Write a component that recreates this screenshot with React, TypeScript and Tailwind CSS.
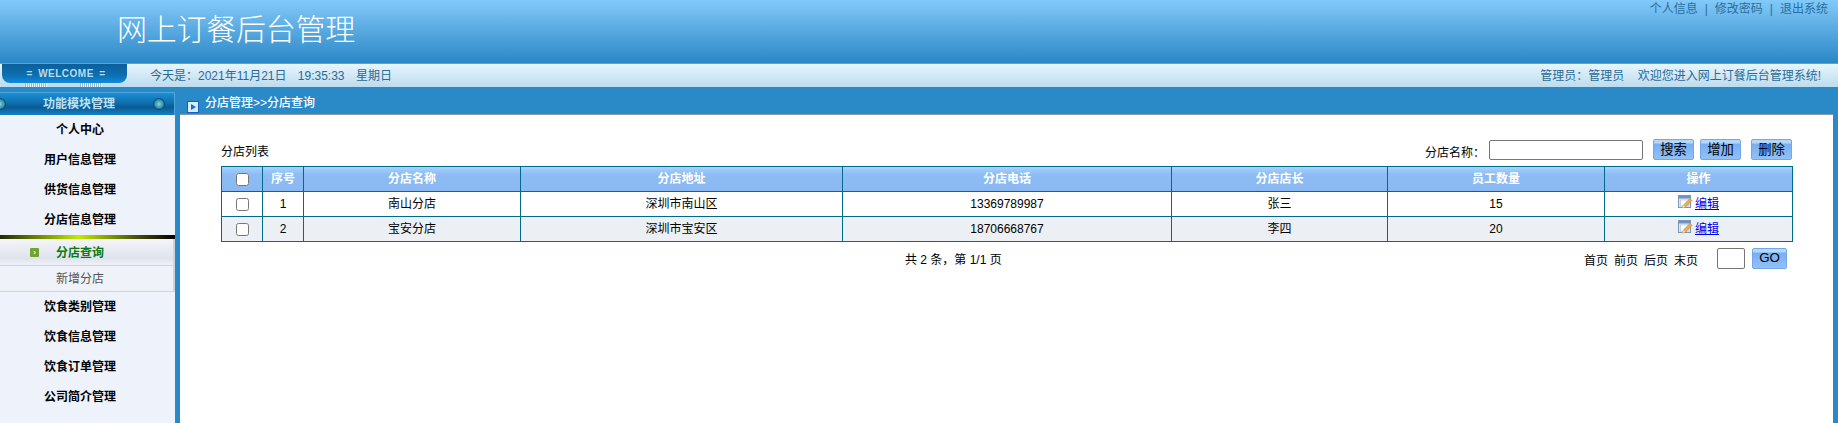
const font = { fontFamily: '"Liberation Sans", "Noto Sans CJK SC", sans-serif' }

const topMenu = ['用户信息管理', '供货信息管理', '分店信息管理']
const bottomMenu = ['饮食类别管理', '饮食信息管理', '饮食订单管理', '公司简介管理']
const headers = ['序号', '分店名称', '分店地址', '分店电话', '分店店长', '员工数量', '操作']
const colWidths = [41, 41, 217, 322, 329, 216, 217, 188]
const rows = [
  { id: 1, name: '南山分店', address: '深圳市南山区', phone: '13369789987', owner: '张三', staff: 15 },
  { id: 2, name: '宝安分店', address: '深圳市宝安区', phone: '18706668767', owner: '李四', staff: 20 },
]

function EditIcon() {
  return (
    <svg width="15" height="15" viewBox="0 0 15 15" className="shrink-0">
      <rect x="0.5" y="0.5" width="12" height="12" fill="#dce8f5" stroke="#7d97b8" />
      <rect x="1" y="1" width="11" height="2.5" fill="#6d93c2" />
      <rect x="2.5" y="5" width="8" height="6" fill="#fff" stroke="#a9bfd8" strokeWidth="0.6" />
      <path d="M4.5 13 L5.5 10 L12 3.5 L14 5.5 L7.5 12 Z" fill="#eeb04a" stroke="#b5792a" strokeWidth="0.6" />
      <path d="M4.5 13 L5.5 10 L7.5 12 Z" fill="#f7e3b5" />
    </svg>
  )
}

function BlueButton({ children, className }: { children: string; className: string }) {
  return (
    <button className={`h-[21px] rounded-[2px] border border-[#74a6ea] bg-[linear-gradient(#b4d8fb_0,#b4d8fb_15%,#78aef2_22%,#92c1f7_100%)] text-[13.3px] leading-none text-black ${className}`}>
      {children}
    </button>
  )
}

function Dot() {
  return <span className="block h-[12px] w-[12px] rounded-full border border-[#0c4a72] bg-[radial-gradient(circle,#7fd6e6_0,#2f8fa8_60%,#12587c_100%)]" />
}

function Sidebar() {
  return (
    <aside className="mt-[5px] flex w-[175px] shrink-0 flex-col bg-[#edf2fb]">
      <div className="flex h-[23px] items-center justify-between border-t border-r border-[#4ea6dd] bg-[linear-gradient(#1c8fd6_0,#0f6fae_45%,#0a5a92_65%,#1480c8_100%)] text-xs font-bold text-[#bfe3f5]">
        <span className="-ml-[6px]"><Dot /></span>
        <span className="-ml-[1px]">功能模块管理</span>
        <span className="mr-[9px]"><Dot /></span>
      </div>
      {['个人中心', ...topMenu].map((m) => (
        <div key={m} className="flex h-[30px] items-center justify-center pr-[15px] text-xs font-bold text-black">{m}</div>
      ))}
      <div className="h-[4px] bg-[linear-gradient(90deg,#1f2a05_0,#c4ea00_45%,#3d4a08_80%,#000_100%)]" />
      <div className="relative flex h-[27px] items-center justify-center border-r-2 border-b border-[#cfd3dc] bg-[linear-gradient(#f4f5f9_0,#dfe3ec_75%,#eef1f7_100%)] pr-[13px] pt-px text-xs font-bold text-[#0b7a12]">
        <span className="absolute left-[30px] top-[9px] flex h-[9px] w-[9px] items-center justify-center rounded-[1px] bg-[#6fa52c] text-[8px] leading-none text-white">›</span>
        分店查询
      </div>
      <div className="flex h-[26px] items-center justify-center border-r-2 border-b border-[#cfd3dc] bg-[#eff2f8] pr-[13px] pt-px text-xs text-[#555]">新增分店</div>
      {bottomMenu.map((m) => (
        <div key={m} className="flex h-[30px] items-center justify-center pr-[15px] text-xs font-bold text-black">{m}</div>
      ))}
    </aside>
  )
}

function BranchTable() {
  return (
    <table className="w-[1571px] table-fixed border-collapse border border-[#006a8a] text-center text-xs text-black">
      <colgroup>
        {colWidths.map((w, i) => (
          <col key={i} style={{ width: w }} />
        ))}
      </colgroup>
      <thead>
        <tr className="h-[25px] bg-[linear-gradient(#a8d2fb_0,#8dbcf4_30%,#8ab8f2_100%)] font-bold text-white">
          <th className="border border-[#006a8a] p-0 pl-px"><input type="checkbox" className="mx-auto block" /></th>
          {headers.map((h) => (
            <th key={h} className="border border-[#006a8a] p-0">{h}</th>
          ))}
        </tr>
      </thead>
      <tbody>
        {rows.map((r, i) => (
          <tr key={r.id} className={`h-[25px] ${i % 2 ? 'bg-[#ecf0f5]' : 'bg-white'}`}>
            <td className="border border-[#006a8a] p-0 pl-px"><input type="checkbox" className="mx-auto block" /></td>
            <td className="border border-[#006a8a] p-0">{r.id}</td>
            <td className="border border-[#006a8a] p-0">{r.name}</td>
            <td className="border border-[#006a8a] p-0">{r.address}</td>
            <td className="border border-[#006a8a] p-0">{r.phone}</td>
            <td className="border border-[#006a8a] p-0">{r.owner}</td>
            <td className="border border-[#006a8a] p-0">{r.staff}</td>
            <td className="border border-[#006a8a] p-0">
              <div className="flex items-center justify-center gap-[2px]">
                <span className="-mt-1"><EditIcon /></span>
                <a href="#" className="text-[#0000ee] underline">编辑</a>
              </div>
            </td>
          </tr>
        ))}
      </tbody>
    </table>
  )
}

export default function App() {
  return (
    <div className="flex h-screen flex-col overflow-hidden bg-[#2a89c7]" style={font}>
      <header className="flex h-[63px] shrink-0 justify-between bg-[linear-gradient(#83c9fa_0,#2a87c6_100%)] pl-[117px] pr-[10px]">
        <h1 className="mt-[10px] text-[30px] font-light leading-[40px] tracking-[-0.25px] text-white">网上订餐后台管理</h1>
        <div className="mt-px flex h-[16px] gap-[7px] text-xs leading-[16px] text-[#2a6f9f]">
          <span>个人信息</span><span>|</span><span>修改密码</span><span>|</span><span>退出系统</span>
        </div>
      </header>

      <div className="flex h-[24px] shrink-0 items-center border-t border-[#5aa3d4] bg-[linear-gradient(#e7f5fe_0,#bcdcee_100%)] pl-[2px] pr-[17px] text-xs text-[#2b6a94]">
        <div className="relative mb-[4px] flex h-[19px] w-[125px] items-center justify-center rounded-b-[8px] bg-[linear-gradient(#0c5f99_0,#0d6fb2_60%,#0f8be0_100%)] pl-[3px] text-[10px] font-bold tracking-[0.5px] text-[#b9dcf0]">
          <span className="whitespace-pre [word-spacing:2px]">= WELCOME =</span>
          <span className="absolute left-[23px] top-[19px] h-[4px] w-[22px] bg-[repeating-linear-gradient(90deg,#9fb9cc_0,#9fb9cc_1px,#e8f2f9_1px,#e8f2f9_2px)]" />
          <span className="absolute left-[78px] top-[19px] h-[4px] w-[22px] bg-[repeating-linear-gradient(90deg,#9fb9cc_0,#9fb9cc_1px,#e8f2f9_1px,#e8f2f9_2px)]" />
        </div>
        <span className="ml-[23px] whitespace-pre [word-spacing:-0.5px]">{'今天是\uFF1A2021年11月21日    19:35:33    星期日'}</span>
        <span className="ml-auto whitespace-pre">{'管理员\uFF1A管理员    欢迎您进入网上订餐后台管理系统!'}</span>
      </div>

      <div className="flex min-h-0 flex-1 gap-[5px]">
        <Sidebar />
        <main className="flex min-w-0 flex-1 flex-col">
          <div className="relative flex h-[27px] shrink-0 items-center pt-[4px] pl-[25px] text-xs font-medium text-white">
            <span className="absolute left-[7px] top-[14px] flex h-[12px] w-[12px] items-center justify-center border border-[#0f62c9] bg-[#d8ecff]">
              <span className="h-0 w-0 border-y-[3px] border-l-[5px] border-y-transparent border-l-[#1470d8]" />
            </span>
            分店管理&gt;&gt;分店查询
          </div>
          <div className="mr-[5px] flex-1 border-t border-[#8a9aa6] bg-white pl-[41px] pt-[24px]">
            <div className="flex h-[27px] w-[1571px] items-start text-xs text-black">
              <span className="mt-[5px]">分店列表</span>
              <span className="ml-auto mt-[6px]">{'分店名称\uFF1A'}</span>
              <input className="ml-[4px] mt-px h-[20px] w-[154px] rounded-[2px] border border-[#767676] bg-white" />
              <BlueButton className="ml-[10px] w-[41px]">搜索</BlueButton>
              <BlueButton className="ml-[6px] w-[41px]">增加</BlueButton>
              <BlueButton className="ml-[10px] w-[41px]">删除</BlueButton>
            </div>
            <BranchTable />
            <div className="mt-[5px] flex h-[22px] w-[1571px] items-center pr-[5px] text-xs text-black">
              <span className="ml-[684px] mt-[3px]">{'共 2 条\uFF0C第 1/1 页'}</span>
              <div className="ml-auto flex items-center gap-[6px]">
                <span className="mt-[5px]">首页</span><span className="mt-[5px]">前页</span><span className="mt-[5px]">后页</span><span className="mt-[5px]">末页</span>
                <input className="ml-[13px] h-[21px] w-[28px] rounded-[2px] border border-[#767676] bg-white" />
                <BlueButton className="ml-px w-[35px]">GO</BlueButton>
              </div>
            </div>
          </div>
        </main>
      </div>
    </div>
  )
}
